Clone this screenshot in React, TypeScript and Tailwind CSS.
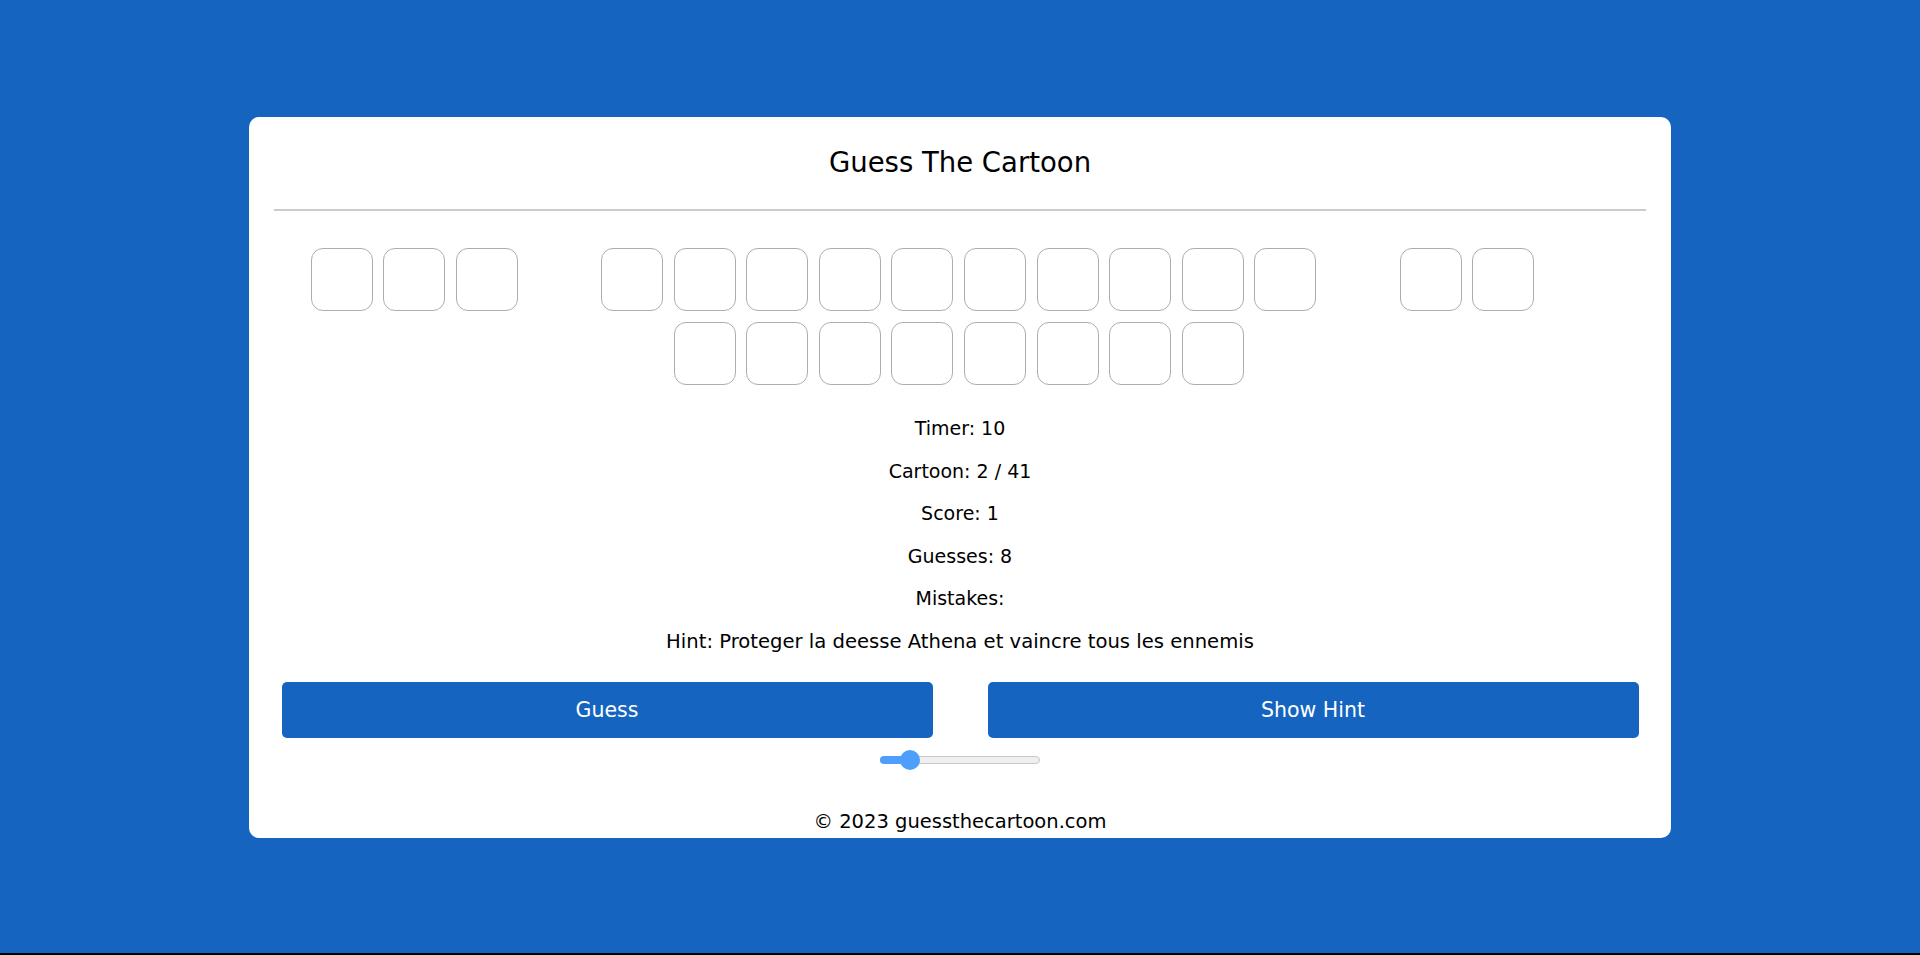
import React from "react";

const font = "font-['DejaVu_Sans',sans-serif]";

const answer = "LES CHEVALIERS DU ZODIAQUE";

function LetterSlot({ blank }: { blank?: boolean }) {
  return (
    <div
      className={`w-[62px] h-[63px] mx-[5.3px] my-[5.5px] rounded-[12px] ${
        blank ? "" : "border border-[#adadad]"
      }`}
    />
  );
}

export default function App() {
  const words = answer.split(" ");

  return (
    <div className={`w-full h-[955px] bg-black ${font}`}>
      <div className="h-[953px] bg-[#1565c0] pt-[117px] flex justify-center">
        <div className="w-[1422px] h-[721px] bg-white rounded-[10px] px-[25px] flex flex-col items-center text-black">
          <h1 className="pt-[29px] text-[27.5px] leading-[32px] font-normal">Guess The Cartoon</h1>
          <div className="w-full mt-[31px] border-t-2 border-[#cccccc]" />

          {/* letter boxes, one slot per char, a blank slot after each word */}
          <div className="w-full mt-[31px] pr-[2.5px] flex flex-wrap justify-center">
            {words.map((w, wi) => (
              <React.Fragment key={wi}>
                {w.split("").map((_, li) => (
                  <LetterSlot key={li} />
                ))}
                {wi < words.length - 1 && <LetterSlot blank />}
              </React.Fragment>
            ))}
          </div>

          <div className="mt-[25px] flex flex-col items-center gap-[15.6px] text-[19px] leading-[27px]">
            <p>Timer: 10</p>
            <p>Cartoon: 2 / 41</p>
            <p>Score: 1</p>
            <p>Guesses: 8</p>
            <p>Mistakes:</p>
            <p className="text-[19.6px]">Hint: Proteger la deesse Athena et vaincre tous les ennemis</p>
          </div>

          <div className="w-full mt-[27px] px-[7.5px] flex justify-between">
            <button className="w-[651px] h-[56px] rounded-[5px] bg-[#1565c0] text-white text-[20.5px]">
              Guess
            </button>
            <button className="w-[651px] h-[56px] rounded-[5px] bg-[#1565c0] text-white text-[20.5px]">
              Show Hint
            </button>
          </div>

          {/* volume slider */}
          <div className="mt-[12px] relative w-[160px] h-[20px] flex items-center">
            <div className="w-full h-[8px] rounded-full bg-[#efefef] border border-[#c8c8c8]" />
            <div className="absolute left-0 w-[30px] h-[8px] rounded-full bg-[#4d9ffb]" />
            <div className="absolute left-[19.5px] w-[20px] h-[20px] rounded-full bg-[#4d9ffb]" />
          </div>

          <p className="mt-[38px] text-[19.5px] leading-[27px]">© 2023 guessthecartoon.com</p>
        </div>
      </div>
    </div>
  );
}
